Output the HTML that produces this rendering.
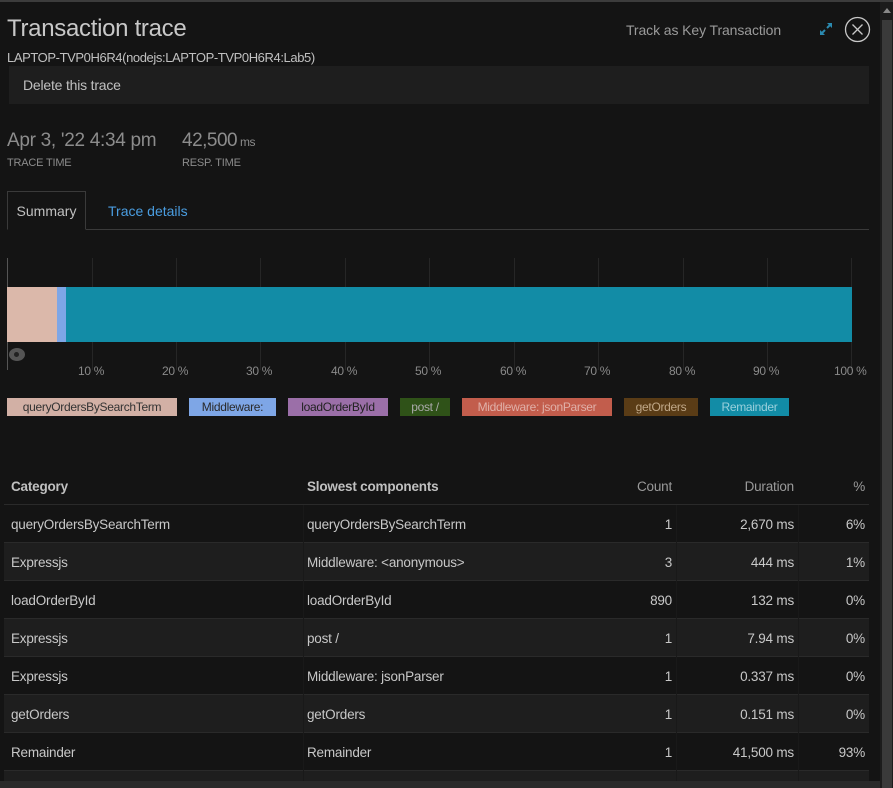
<!DOCTYPE html>
<html style="overflow:hidden;height:788px"><head><meta charset="utf-8"><style>
*{box-sizing:border-box;margin:0;padding:0}
body{width:893px;height:788px;background:#141414;font-family:"Liberation Sans",sans-serif;color:#c8c8c8;position:relative;overflow:hidden}
.a{position:absolute;white-space:nowrap}
.topbar{left:0;top:0;width:893px;height:2px;background:#3c3c3c}
.sb{left:880px;top:2px;width:13px;height:786px;background:#1c1c1c}
.thumb{left:882px;top:20px;width:10px;height:768px;background:#3a3a3a}
.grid{position:absolute;top:258px;width:1px;height:112px;background:#262626}
.lbl{position:absolute;top:364px;font-size:12px;color:#8a8a8a;letter-spacing:-.3px}
.leg{position:absolute;top:398px;height:18px;font-size:12px;line-height:18px;text-align:center;letter-spacing:-.3px}
.row{position:absolute;left:4px;width:865px;height:38px;border-bottom:1px solid #2a2a2a;font-size:13.5px;line-height:39px;letter-spacing:-.2px}
.row.alt{background:#1e1e1e}
.row span{position:absolute}
.c1{left:7px}.c2{left:303px}.c3{right:197px}.c4{right:75px}.c5{right:4px}
.vs{position:absolute;top:505px;width:1px;height:276px;background:#191919}
</style></head><body>
<div class="a topbar"></div>
<div class="a" style="left:7px;top:15px;font-size:24px;color:#c8c8c8;letter-spacing:-.3px">Transaction trace</div>
<div class="a" style="left:7px;top:50px;font-size:13px;color:#c0c0c0;letter-spacing:-.4px">LAPTOP-TVP0H6R4(nodejs:LAPTOP-TVP0H6R4:Lab5)</div>
<div class="a" style="left:626px;top:22px;font-size:14px;color:#9a9a9a;letter-spacing:-.1px">Track as Key Transaction</div>
<svg class="a" style="left:819px;top:22px" width="14" height="14" viewBox="0 0 14 14"><path d="M8 1h5v5l-1.8-1.8-2.5 2.5-1.4-1.4 2.5-2.5zM6 13H1V8l1.8 1.8 2.5-2.5 1.4 1.4-2.5 2.5z" fill="#2b8ab0"/></svg>
<svg class="a" style="left:844px;top:16px" width="27" height="27" viewBox="0 0 27 27"><circle cx="13.5" cy="13.5" r="12" fill="none" stroke="#c8c8c8" stroke-width="1.3"/><path d="M8.5 8.5l10 10M18.5 8.5l-10 10" stroke="#c8c8c8" stroke-width="1.3"/></svg>
<div class="a" style="left:9px;top:66px;width:860px;height:38px;background:#1e1e1e;font-size:14px;line-height:38px;padding-left:14px;color:#c0c0c0;letter-spacing:-.2px">Delete this trace</div>
<div class="a" style="left:7px;top:130px;font-size:19px;color:#8c8c8c;letter-spacing:-.3px">Apr 3, '22 4:34 pm</div>
<div class="a" style="left:182px;top:130px;font-size:19px;color:#8c8c8c;letter-spacing:-.5px">42,500<span style="font-size:12px"> ms</span></div>
<div class="a" style="left:7px;top:157px;font-size:11px;color:#8c8c8c;letter-spacing:-.2px">TRACE TIME</div>
<div class="a" style="left:182px;top:157px;font-size:11px;color:#8c8c8c;letter-spacing:-.2px">RESP. TIME</div>
<div class="a" style="left:7px;top:229px;width:862px;height:1px;background:#3a3a3a"></div>
<div class="a" style="left:7px;top:191px;width:79px;height:39px;border:1px solid #3a3a3a;border-bottom:1px solid #141414;background:#141414;font-size:14px;line-height:38px;text-align:center;color:#c0c0c0">Summary</div>
<div class="a" style="left:108px;top:203px;font-size:14px;color:#4a9de0">Trace details</div>
<div class="grid" style="left:92px"></div><div class="grid" style="left:176px"></div><div class="grid" style="left:260px"></div><div class="grid" style="left:345px"></div><div class="grid" style="left:429px"></div><div class="grid" style="left:514px"></div><div class="grid" style="left:598px"></div><div class="grid" style="left:683px"></div><div class="grid" style="left:767px"></div><div class="grid" style="left:851px"></div>
<div class="a" style="left:7px;top:258px;width:1px;height:112px;background:#555"></div>
<div class="a" style="left:7px;top:287px;width:50px;height:55px;background:#dbb8aa"></div>
<div class="a" style="left:57px;top:287px;width:9px;height:55px;background:#7ea6e6"></div>
<div class="a" style="left:66px;top:287px;width:786px;height:55px;background:#128ca6"></div>
<div class="a" style="left:9px;top:348px;width:16px;height:13px;border-radius:50%;background:#555"><div style="position:absolute;left:5px;top:4px;width:5px;height:5px;border-radius:50%;background:#222"></div></div>
<div class="lbl" style="left:78px">10 %</div><div class="lbl" style="left:162px">20 %</div><div class="lbl" style="left:246px">30 %</div><div class="lbl" style="left:331px">40 %</div><div class="lbl" style="left:415px">50 %</div><div class="lbl" style="left:500px">60 %</div><div class="lbl" style="left:584px">70 %</div><div class="lbl" style="left:669px">80 %</div><div class="lbl" style="left:753px">90 %</div><div class="lbl" style="left:834px">100 %</div>
<div class="leg" style="left:7px;width:170px;background:#d2b0a5;color:#333">queryOrdersBySearchTerm</div>
<div class="leg" style="left:189px;width:87px;background:#7ea6e6;color:#2a2a2a">Middleware:</div>
<div class="leg" style="left:288px;width:100px;background:#9b6fa8;color:#222">loadOrderById</div>
<div class="leg" style="left:400px;width:50px;background:#2f5218;color:#aaa">post /</div>
<div class="leg" style="left:462px;width:150px;background:#c25d4c;color:#e0b0a8">Middleware: jsonParser</div>
<div class="leg" style="left:624px;width:74px;background:#5a3c16;color:#c0a888">getOrders</div>
<div class="leg" style="left:710px;width:79px;background:#128ca6;color:#9ad0dc">Remainder</div>
<div class="row" style="top:467px;font-weight:bold;color:#c0c0c0"><span class="c1">Category</span><span class="c2">Slowest components</span><span class="c3" style="font-weight:normal;color:#9a9a9a">Count</span><span class="c4" style="font-weight:normal;color:#9a9a9a">Duration</span><span class="c5" style="font-weight:normal;color:#9a9a9a">%</span></div>
<div class="row" style="top:505px"><span class="c1">queryOrdersBySearchTerm</span><span class="c2">queryOrdersBySearchTerm</span><span class="c3">1</span><span class="c4">2,670 ms</span><span class="c5">6%</span></div>
<div class="row alt" style="top:543px"><span class="c1">Expressjs</span><span class="c2">Middleware: &lt;anonymous&gt;</span><span class="c3">3</span><span class="c4">444 ms</span><span class="c5">1%</span></div>
<div class="row" style="top:581px"><span class="c1">loadOrderById</span><span class="c2">loadOrderById</span><span class="c3">890</span><span class="c4">132 ms</span><span class="c5">0%</span></div>
<div class="row alt" style="top:619px"><span class="c1">Expressjs</span><span class="c2">post /</span><span class="c3">1</span><span class="c4">7.94 ms</span><span class="c5">0%</span></div>
<div class="row" style="top:657px"><span class="c1">Expressjs</span><span class="c2">Middleware: jsonParser</span><span class="c3">1</span><span class="c4">0.337 ms</span><span class="c5">0%</span></div>
<div class="row alt" style="top:695px"><span class="c1">getOrders</span><span class="c2">getOrders</span><span class="c3">1</span><span class="c4">0.151 ms</span><span class="c5">0%</span></div>
<div class="row" style="top:733px"><span class="c1">Remainder</span><span class="c2">Remainder</span><span class="c3">1</span><span class="c4">41,500 ms</span><span class="c5">93%</span></div>
<div class="a" style="left:4px;top:771px;width:865px;height:10px;background:#1e1e1e"></div>
<div class="vs" style="left:303px"></div><div class="vs" style="left:676px"></div><div class="vs" style="left:798px"></div>
<div class="a" style="left:0;top:781px;width:880px;height:7px;background:#2a2a2a"></div>
<div class="a sb"></div><div class="a thumb"></div>
<div class="a" style="left:883px;top:8px;width:0;height:0;border-left:4px solid transparent;border-right:4px solid transparent;border-bottom:5px solid #888"></div>
</body></html>
